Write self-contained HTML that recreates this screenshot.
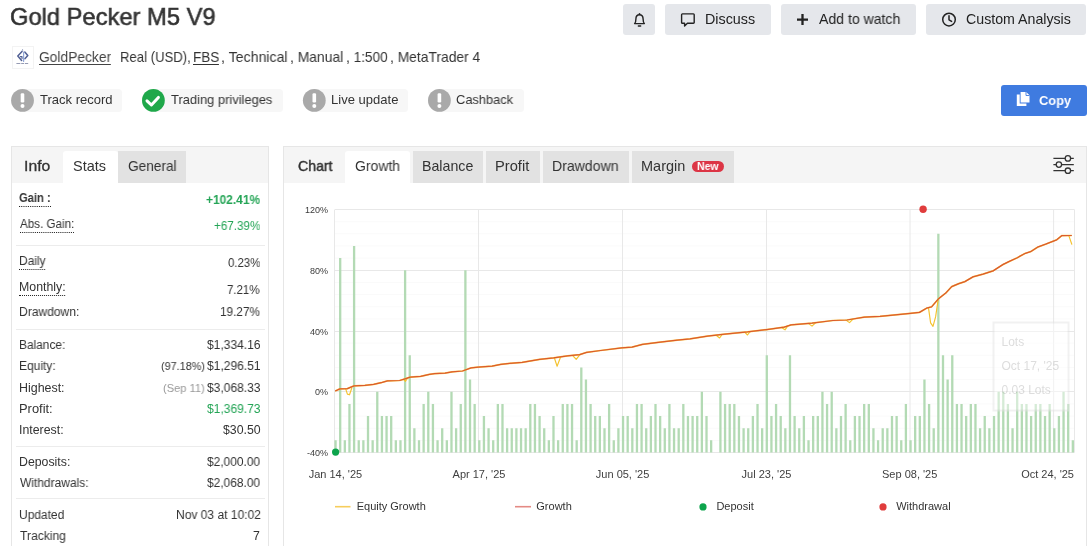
<!DOCTYPE html>
<html lang="en">
<head>
<meta charset="utf-8">
<title>Gold Pecker M5 V9</title>
<style>
html,body{margin:0;padding:0;background:#fff;}
body{width:1090px;height:546px;position:relative;overflow:hidden;font-family:"Liberation Sans",Arial,sans-serif;}
.abs{position:absolute;}
.t{position:absolute;white-space:nowrap;line-height:1;transform-origin:0 0;will-change:transform;font-family:"Liberation Sans",Arial,sans-serif;}
.t u{text-decoration:underline;text-decoration-thickness:1px;text-underline-offset:2px;}
.dot{border-bottom:1px dotted #222;padding-bottom:1px;}
.btn{position:absolute;top:4px;height:31px;background:#e5e7eb;border-radius:3px;}
.pill{position:absolute;top:88.8px;height:23.6px;background:#f7f7f7;border-radius:12px 4px 4px 12px;}
.panel{position:absolute;top:146px;height:420px;border:1px solid #e6e6e6;box-sizing:border-box;background:#fff;}
.phead{position:absolute;left:0;right:0;top:0;height:36px;background:#f5f5f5;}
.tab{position:absolute;top:151px;height:32px;background:#e2e2e2;}
.tab.on{background:#fff;height:33px;border-radius:3px 3px 0 0;}
.sep{position:absolute;left:16px;width:249px;height:1px;background:#ececec;}
svg{will-change:transform;}
svg text{font-family:"Liberation Sans",Arial,sans-serif;}
</style>
</head>
<body>

<!-- top buttons -->
<div class="btn" style="left:623px;width:32px"></div>
<div class="btn" style="left:665px;width:106px"></div>
<div class="btn" style="left:781px;width:135px"></div>
<div class="btn" style="left:926px;width:160px"></div>
<div class="abs" style="left:1001px;top:85px;width:86px;height:31px;background:#3f7be0;border-radius:3px"></div>

<!-- avatar -->
<div class="abs" style="left:12px;top:46px;width:22px;height:23px;border:1px solid #f3f3f3;box-sizing:border-box;background:#fff"></div>

<!-- badges -->
<div class="pill" style="left:12px;width:110px"></div>
<div class="pill" style="left:142px;width:141px"></div>
<div class="pill" style="left:303px;width:105px"></div>
<div class="pill" style="left:428px;width:96px"></div>

<!-- panels -->
<div class="panel" style="left:11px;width:258px"><div class="phead"></div></div>
<div class="panel" style="left:283px;width:804px"><div class="phead"></div></div>
<div class="tab on" style="left:63px;width:55px"></div>
<div class="tab" style="left:118px;width:68px"></div>
<div class="tab on" style="left:345px;width:65px"></div>
<div class="tab" style="left:413px;width:70px"></div>
<div class="tab" style="left:486px;width:54px"></div>
<div class="tab" style="left:543px;width:86px"></div>
<div class="tab" style="left:632px;width:102px"></div>
<div class="abs" style="left:692px;top:161px;width:32px;height:11px;border-radius:6px;background:#dc3545"></div>

<div class="sep" style="top:245px"></div>
<div class="sep" style="top:329px"></div>
<div class="sep" style="top:446px"></div>
<div class="sep" style="top:498px"></div>

<!-- icons -->
<svg class="abs" style="left:0;top:0" width="1090" height="130" viewBox="0 0 1090 130">
  <!-- avatar logo -->
  <g fill="none" stroke="#44548c" stroke-width="1.5" stroke-linejoin="round" stroke-linecap="round" opacity="0.92">
    <path d="M22.0 51.4 L17.8 56.0 L21.6 60.4"/>
    <path d="M20.4 56.6 H22.0 V58.6" stroke-width="1.2"/>
    <path d="M24.8 52.0 L27.8 55.5 L24.9 58.8"/>
    <path d="M23.6 52.0 V61.4" stroke="#8aa1d6" stroke-width="1.2"/>
  </g>
  <path d="M21.8 50.3 L22.6 49.2 L23.4 50.3 Z" fill="#44548c"/>
  <path d="M16.4 63.5 H29" stroke="#8a90aa" stroke-width="0.9" stroke-dasharray="4 0.8 3 0.8 3.2 1" fill="none"/>
  <!-- bell -->
  <g fill="none" stroke="#222" stroke-width="1.4" stroke-linejoin="round" stroke-linecap="round">
    <path d="M634.6 23.6 H644.4 C643.3 22.4 643.1 21.2 643.1 18.9 C643.1 16.3 641.6 14.7 639.5 14.7 C637.4 14.7 635.9 16.3 635.9 18.9 C635.9 21.2 635.7 22.4 634.6 23.6 Z"/>
    <path d="M638.4 26 H640.6" stroke-width="1.6"/>
    <path d="M639.5 13.6 V14.6"/>
  </g>
  <!-- discuss bubble -->
  <path d="M682.4 13.9 H693.4 a0.8 0.8 0 0 1 0.8 0.8 V22.4 a0.8 0.8 0 0 1 -0.8 0.8 H687.4 L684.6 25.9 V23.2 H682.4 a0.8 0.8 0 0 1 -0.8 -0.8 V14.7 a0.8 0.8 0 0 1 0.8 -0.8 Z" fill="none" stroke="#222" stroke-width="1.4" stroke-linejoin="round"/>
  <!-- plus -->
  <path d="M797 19.6 H808 M802.5 14.1 V25.1" stroke="#222" stroke-width="2.3" fill="none"/>
  <!-- clock -->
  <circle cx="949" cy="19.6" r="6.3" fill="none" stroke="#222" stroke-width="1.5"/>
  <path d="M949 15.8 V19.8 L951.6 21.4" fill="none" stroke="#222" stroke-width="1.5" stroke-linecap="round" stroke-linejoin="round"/>
  <!-- copy icon -->
  <path d="M1020.6 92 H1026.2 L1029.5 95.3 V102.6 H1020.6 Z" fill="#fff"/>
  <path d="M1016.8 94.4 H1019.7 V103.5 H1026.4 V105.9 H1016.8 Z" fill="#fff"/>
  <path d="M1026 92 V95.5 H1029.5" fill="none" stroke="#3f7be0" stroke-width="0.9"/>
  <!-- badges -->
  <g>
    <circle cx="22.5" cy="100.4" r="11.4" fill="#a9a9a9"/>
    <rect x="20.7" y="93.3" width="3.6" height="9.2" rx="1.2" fill="#fff"/>
    <circle cx="22.5" cy="106.1" r="2" fill="#fff"/>
    <circle cx="153.4" cy="100.4" r="11.4" fill="#1fa84a"/>
    <path d="M147.0 100.8 L151.4 105.0 L158.4 97.4" fill="none" stroke="#fff" stroke-width="3" stroke-linecap="round" stroke-linejoin="round"/>
    <circle cx="314.3" cy="100.4" r="11.4" fill="#a9a9a9"/>
    <rect x="312.5" y="93.3" width="3.6" height="9.2" rx="1.2" fill="#fff"/>
    <circle cx="314.3" cy="106.1" r="2" fill="#fff"/>
    <circle cx="439.4" cy="100.4" r="11.4" fill="#a9a9a9"/>
    <rect x="437.6" y="93.3" width="3.6" height="9.2" rx="1.2" fill="#fff"/>
    <circle cx="439.4" cy="106.1" r="2" fill="#fff"/>
  </g>
</svg>
<!-- settings icon -->
<svg class="abs" style="left:1050px;top:150px" width="30" height="30" viewBox="1050 150 30 30">
  <g stroke="#333" stroke-width="1.3" fill="#f5f5f5">
    <path d="M1053.4 158.4 H1073.8 M1053.4 164.6 H1073.8 M1053.4 170.7 H1073.8" fill="none"/>
    <circle cx="1067.9" cy="158.4" r="2.7"/>
    <circle cx="1058.9" cy="164.6" r="2.7"/>
    <circle cx="1067.9" cy="170.7" r="2.7"/>
  </g>
</svg>

<svg class="abs" style="left:0;top:0" width="1090" height="546" viewBox="0 0 1090 546">
<line x1="335" x2="1074.5" y1="440.4" y2="440.4" stroke="#fafafa" stroke-width="1"/>
<line x1="335" x2="1074.5" y1="428.2" y2="428.2" stroke="#fafafa" stroke-width="1"/>
<line x1="335" x2="1074.5" y1="416.1" y2="416.1" stroke="#fafafa" stroke-width="1"/>
<line x1="335" x2="1074.5" y1="403.9" y2="403.9" stroke="#fafafa" stroke-width="1"/>
<line x1="335" x2="1074.5" y1="379.6" y2="379.6" stroke="#fafafa" stroke-width="1"/>
<line x1="335" x2="1074.5" y1="367.4" y2="367.4" stroke="#fafafa" stroke-width="1"/>
<line x1="335" x2="1074.5" y1="355.3" y2="355.3" stroke="#fafafa" stroke-width="1"/>
<line x1="335" x2="1074.5" y1="343.1" y2="343.1" stroke="#fafafa" stroke-width="1"/>
<line x1="335" x2="1074.5" y1="318.9" y2="318.9" stroke="#fafafa" stroke-width="1"/>
<line x1="335" x2="1074.5" y1="306.7" y2="306.7" stroke="#fafafa" stroke-width="1"/>
<line x1="335" x2="1074.5" y1="294.5" y2="294.5" stroke="#fafafa" stroke-width="1"/>
<line x1="335" x2="1074.5" y1="282.4" y2="282.4" stroke="#fafafa" stroke-width="1"/>
<line x1="335" x2="1074.5" y1="258.1" y2="258.1" stroke="#fafafa" stroke-width="1"/>
<line x1="335" x2="1074.5" y1="245.9" y2="245.9" stroke="#fafafa" stroke-width="1"/>
<line x1="335" x2="1074.5" y1="233.8" y2="233.8" stroke="#fafafa" stroke-width="1"/>
<line x1="335" x2="1074.5" y1="221.7" y2="221.7" stroke="#fafafa" stroke-width="1"/>
<line x1="335" x2="1074.5" y1="209.5" y2="209.5" stroke="#e8e8e8" stroke-width="1"/>
<line x1="335" x2="1074.5" y1="270.5" y2="270.5" stroke="#e8e8e8" stroke-width="1"/>
<line x1="335" x2="1074.5" y1="331.5" y2="331.5" stroke="#e8e8e8" stroke-width="1"/>
<line x1="335" x2="1074.5" y1="391.5" y2="391.5" stroke="#e8e8e8" stroke-width="1"/>
<line x1="335" x2="1074.5" y1="452.5" y2="452.5" stroke="#e8e8e8" stroke-width="1"/>
<line x1="334.5" x2="334.5" y1="209.5" y2="452.5" stroke="#e8e8e8" stroke-width="1"/>
<line x1="478.5" x2="478.5" y1="209.5" y2="452.5" stroke="#e8e8e8" stroke-width="1"/>
<line x1="622.5" x2="622.5" y1="209.5" y2="452.5" stroke="#e8e8e8" stroke-width="1"/>
<line x1="766.5" x2="766.5" y1="209.5" y2="452.5" stroke="#e8e8e8" stroke-width="1"/>
<line x1="910.0" x2="910.0" y1="209.5" y2="452.5" stroke="#e8e8e8" stroke-width="1"/>
<line x1="1053.6" x2="1053.6" y1="209.5" y2="452.5" stroke="#e8e8e8" stroke-width="1"/>
<line x1="1074.5" x2="1074.5" y1="209.5" y2="452.5" stroke="#e8e8e8" stroke-width="1"/>
<path d="M335.55 452.5V440.35M340.19 452.5V258.10M344.82 452.5V440.35M349.46 452.5V403.90M354.10 452.5V245.95M358.74 452.5V440.35M363.37 452.5V440.35M368.01 452.5V416.05M372.65 452.5V440.35M377.28 452.5V391.75M381.92 452.5V416.05M386.56 452.5V416.05M391.19 452.5V416.05M395.83 452.5V440.35M400.47 452.5V440.35M405.11 452.5V270.25M409.74 452.5V355.30M414.38 452.5V428.20M419.02 452.5V440.35M423.65 452.5V403.90M428.29 452.5V391.75M432.93 452.5V403.90M437.56 452.5V440.35M442.20 452.5V428.20M446.84 452.5V440.35M451.48 452.5V391.75M456.11 452.5V428.20M460.75 452.5V403.90M465.39 452.5V270.25M470.02 452.5V379.60M474.66 452.5V403.90M479.30 452.5V440.35M483.93 452.5V416.05M488.57 452.5V428.20M493.21 452.5V440.35M497.85 452.5V403.90M502.48 452.5V403.90M507.12 452.5V428.20M511.76 452.5V428.20M516.39 452.5V428.20M521.03 452.5V428.20M525.67 452.5V428.20M530.30 452.5V403.90M534.94 452.5V403.90M539.58 452.5V416.05M544.22 452.5V428.20M548.85 452.5V440.35M553.49 452.5V416.05M558.13 452.5V440.35M562.76 452.5V403.90M567.40 452.5V403.90M572.04 452.5V403.90M576.67 452.5V440.35M581.31 452.5V367.45M585.95 452.5V379.60M590.59 452.5V403.90M595.22 452.5V416.05M599.86 452.5V416.05M604.50 452.5V428.20M609.13 452.5V403.90M613.77 452.5V440.35M618.41 452.5V428.20M623.04 452.5V416.05M627.68 452.5V416.05M632.32 452.5V428.20M636.95 452.5V403.90M641.59 452.5V403.90M646.23 452.5V428.20M650.87 452.5V416.05M655.50 452.5V403.90M660.14 452.5V416.05M664.78 452.5V428.20M669.41 452.5V403.90M674.05 452.5V428.20M678.69 452.5V428.20M683.33 452.5V403.90M687.96 452.5V416.05M692.60 452.5V416.05M697.24 452.5V416.05M701.87 452.5V391.75M706.51 452.5V416.05M711.15 452.5V440.35M720.42 452.5V391.75M725.06 452.5V403.90M729.69 452.5V403.90M734.33 452.5V403.90M738.97 452.5V416.05M743.61 452.5V428.20M748.24 452.5V428.20M752.88 452.5V416.05M757.52 452.5V403.90M762.15 452.5V428.20M766.79 452.5V355.30M771.43 452.5V416.05M776.07 452.5V403.90M780.70 452.5V416.05M785.34 452.5V428.20M789.98 452.5V355.30M794.61 452.5V416.05M799.25 452.5V428.20M803.89 452.5V416.05M808.52 452.5V440.35M813.16 452.5V416.05M817.80 452.5V416.05M822.43 452.5V391.75M827.07 452.5V403.90M831.71 452.5V391.75M836.35 452.5V428.20M840.98 452.5V416.05M845.62 452.5V403.90M850.26 452.5V440.35M854.89 452.5V416.05M859.53 452.5V416.05M864.17 452.5V403.90M868.81 452.5V403.90M873.44 452.5V428.20M878.08 452.5V440.35M882.72 452.5V428.20M887.35 452.5V428.20M891.99 452.5V416.05M896.63 452.5V416.05M901.26 452.5V440.35M905.90 452.5V403.90M910.54 452.5V440.35M915.17 452.5V416.05M919.81 452.5V416.05M924.45 452.5V379.60M929.09 452.5V403.90M933.72 452.5V428.20M938.36 452.5V233.80M943.00 452.5V355.30M947.63 452.5V379.60M952.27 452.5V355.30M956.91 452.5V403.90M961.54 452.5V403.90M966.18 452.5V416.05M970.82 452.5V403.90M975.46 452.5V403.90M980.09 452.5V428.20M984.73 452.5V416.05M989.37 452.5V428.20M994.00 452.5V416.05M998.64 452.5V391.75M1003.28 452.5V391.75M1007.91 452.5V403.90M1012.55 452.5V428.20M1017.19 452.5V391.75M1021.83 452.5V403.90M1026.46 452.5V403.90M1031.10 452.5V416.05M1035.74 452.5V403.90M1040.37 452.5V403.90M1045.01 452.5V416.05M1049.65 452.5V403.90M1054.28 452.5V428.20M1058.92 452.5V416.05M1063.56 452.5V391.75M1068.20 452.5V403.90M1072.83 452.5V440.35" stroke="#b3dab4" stroke-width="2.3" fill="none"/>
<polyline points="335.2,391.0 339.9,388.9 347.4,388.6 354.1,385.8 364.9,385.4 373.6,384.4 382.3,382.3 387.5,380.9 399.7,380.5 405.0,378.8 410.2,377.1 420.6,376.4 429.4,374.4 434.6,373.6 445.0,373.1 452.0,371.8 462.5,371.0 471.2,367.8 478.2,367.1 492.1,366.1 500.8,364.3 513.0,363.1 522.2,362.4 539.6,359.3 553.6,357.9 567.5,355.8 579.7,354.6 586.7,352.3 600.6,350.5 621.6,347.9 632.0,347.1 642.5,344.4 658.2,342.4 677.3,340.1 690.0,338.9 707.4,336.2 724.9,334.1 747.5,331.9 766.7,329.6 784.1,327.2 791.1,324.9 812.0,323.2 832.9,320.5 846.9,320.0 864.3,317.1 880.0,316.3 890.2,315.3 910.4,313.4 919.4,312.4 926.5,308.2 931.6,306.8 938.6,298.7 945.7,293.1 951.7,286.6 958.8,283.6 964.9,281.6 972.9,276.9 983.0,274.1 993.1,270.9 1003.2,264.4 1009.3,261.4 1017.3,257.7 1025.4,253.3 1030.5,251.7 1037.5,247.2 1045.6,244.2 1056.7,239.8 1061.7,235.7 1071.8,235.5" fill="none" stroke="#f6c63c" stroke-width="1.7" stroke-linejoin="round" opacity="0.9"/>
<polyline points="345.7,388.9 347.4,394.1 349.5,394.8 351.8,388.0" fill="none" stroke="#f4c22e" stroke-width="1.15" stroke-linejoin="round" stroke-linecap="round"/>
<polyline points="403.5,379.5 405.5,381.3 407.5,378.2" fill="none" stroke="#f4c22e" stroke-width="1.15" stroke-linejoin="round" stroke-linecap="round"/>
<polyline points="554.4,358.0 557.1,366.2 560.5,357.2" fill="none" stroke="#f4c22e" stroke-width="1.15" stroke-linejoin="round" stroke-linecap="round"/>
<polyline points="572.7,355.5 576.2,359.3 579.7,354.8" fill="none" stroke="#f4c22e" stroke-width="1.15" stroke-linejoin="round" stroke-linecap="round"/>
<polyline points="716.1,335.3 719.6,338.0 722.2,334.5" fill="none" stroke="#f4c22e" stroke-width="1.15" stroke-linejoin="round" stroke-linecap="round"/>
<polyline points="744.9,332.3 747.5,335.0 750.1,331.7" fill="none" stroke="#f4c22e" stroke-width="1.15" stroke-linejoin="round" stroke-linecap="round"/>
<polyline points="781.5,327.6 785.0,329.8 787.6,326.2" fill="none" stroke="#f4c22e" stroke-width="1.15" stroke-linejoin="round" stroke-linecap="round"/>
<polyline points="808.5,323.6 812.0,326.1 815.5,322.8" fill="none" stroke="#f4c22e" stroke-width="1.15" stroke-linejoin="round" stroke-linecap="round"/>
<polyline points="846.0,320.1 849.5,322.6 853.0,319.1" fill="none" stroke="#f4c22e" stroke-width="1.15" stroke-linejoin="round" stroke-linecap="round"/>
<polyline points="928.5,307.8 930.6,322.9 933.0,326.4 935.6,316.9 938.2,299.3" fill="none" stroke="#f4c22e" stroke-width="1.15" stroke-linejoin="round" stroke-linecap="round"/>
<polyline points="1068.8,235.6 1071.8,244.2" fill="none" stroke="#f4c22e" stroke-width="1.15" stroke-linejoin="round" stroke-linecap="round"/>
<polyline points="335.2,391.0 339.9,388.9 347.4,388.6 354.1,385.8 364.9,385.4 373.6,384.4 382.3,382.3 387.5,380.9 399.7,380.5 405.0,378.8 410.2,377.1 420.6,376.4 429.4,374.4 434.6,373.6 445.0,373.1 452.0,371.8 462.5,371.0 471.2,367.8 478.2,367.1 492.1,366.1 500.8,364.3 513.0,363.1 522.2,362.4 539.6,359.3 553.6,357.9 567.5,355.8 579.7,354.6 586.7,352.3 600.6,350.5 621.6,347.9 632.0,347.1 642.5,344.4 658.2,342.4 677.3,340.1 690.0,338.9 707.4,336.2 724.9,334.1 747.5,331.9 766.7,329.6 784.1,327.2 791.1,324.9 812.0,323.2 832.9,320.5 846.9,320.0 864.3,317.1 880.0,316.3 890.2,315.3 910.4,313.4 919.4,312.4 926.5,308.2 931.6,306.8 938.6,298.7 945.7,293.1 951.7,286.6 958.8,283.6 964.9,281.6 972.9,276.9 983.0,274.1 993.1,270.9 1003.2,264.4 1009.3,261.4 1017.3,257.7 1025.4,253.3 1030.5,251.7 1037.5,247.2 1045.6,244.2 1056.7,239.8 1061.7,235.7 1071.8,235.5" fill="none" stroke="#dc5a2e" stroke-width="1.25" stroke-linejoin="round"/>
<circle cx="335.6" cy="452.1" r="3.6" fill="#0da44c"/>
<circle cx="923.1" cy="209.2" r="3.7" fill="#e03c3c"/>
<text x="328" y="212.8" text-anchor="end" font-size="9" fill="#3a3a3a">120%</text>
<text x="328" y="273.8" text-anchor="end" font-size="9" fill="#3a3a3a">80%</text>
<text x="328" y="334.8" text-anchor="end" font-size="9" fill="#3a3a3a">40%</text>
<text x="328" y="394.8" text-anchor="end" font-size="9" fill="#3a3a3a">0%</text>
<text x="328" y="455.8" text-anchor="end" font-size="9" fill="#3a3a3a">-40%</text>
<text x="335.4" y="477.9" text-anchor="middle" font-size="11" fill="#3f3f3f">Jan 14, '25</text>
<text x="479.0" y="477.9" text-anchor="middle" font-size="11" fill="#3f3f3f">Apr 17, '25</text>
<text x="622.6" y="477.9" text-anchor="middle" font-size="11" fill="#3f3f3f">Jun 05, '25</text>
<text x="766.5" y="477.9" text-anchor="middle" font-size="11" fill="#3f3f3f">Jul 23, '25</text>
<text x="909.7" y="477.9" text-anchor="middle" font-size="11" fill="#3f3f3f">Sep 08, '25</text>
<text x="1074.0" y="477.9" text-anchor="end" font-size="11" fill="#3f3f3f">Oct 24, '25</text>
<line x1="335" x2="350.5" y1="506.7" y2="506.7" stroke="#f6cd5c" stroke-width="1.6"/>
<text x="356.7" y="510" font-size="11" fill="#333">Equity Growth</text>
<line x1="515" x2="531" y1="506.7" y2="506.7" stroke="#e48a84" stroke-width="1.6"/>
<text x="536.3" y="510" font-size="11" fill="#333">Growth</text>
<circle cx="703" cy="506.9" r="3.6" fill="#0da44c"/>
<text x="716.4" y="510" font-size="11" fill="#333">Deposit</text>
<circle cx="883" cy="506.9" r="3.6" fill="#e03c3c"/>
<text x="896.2" y="510" font-size="11" fill="#333">Withdrawal</text>
<g opacity="0.5"><rect x="993.5" y="322.5" width="75" height="88" fill="#fff" fill-opacity="0.9" stroke="#e4e4e4" stroke-width="2"/>
<text x="1001.5" y="345.8" font-size="12" fill="#bbb">Lots</text><text x="1001.5" y="369.8" font-size="12" fill="#bbb">Oct 17, '25</text><text x="1001.5" y="393.6" font-size="12" fill="#bbb">0.03 Lots</text></g>
</svg>

<span class="t" id="t0" style="left:10.22px;top:5.48px;font-size:24px;transform:scaleX(0.9880);color:#333;-webkit-text-stroke:0.55px #333;">Gold Pecker M5 V9</span>
<span class="t" id="t1" style="left:38.67px;top:50.10px;font-size:14.3px;transform:scaleX(0.9658);color:#444;"><u>GoldPecker</u></span>
<span class="t" id="t2" style="left:120.01px;top:50.10px;font-size:14.3px;transform:scaleX(0.9184);color:#333;">Real (USD),</span>
<span class="t" id="t3" style="left:193.41px;top:50.10px;font-size:14.3px;transform:scaleX(0.9454);color:#333;"><u>FBS</u></span>
<span class="t" id="t4" style="left:221.38px;top:50.10px;font-size:14.3px;transform:scaleX(0.9893);color:#333;">, Technical</span>
<span class="t" id="t5" style="left:290.06px;top:50.10px;font-size:14.3px;transform:scaleX(0.9705);color:#333;">, Manual</span>
<span class="t" id="t6" style="left:345.74px;top:50.10px;font-size:14.3px;transform:scaleX(0.9550);color:#333;">, 1:500</span>
<span class="t" id="t7" style="left:389.62px;top:50.10px;font-size:14.3px;transform:scaleX(0.9679);color:#333;">, MetaTrader 4</span>
<span class="t" id="t8" style="left:39.90px;top:93.20px;font-size:13px;transform:scaleX(1.0000);color:#333;">Track record</span>
<span class="t" id="t9" style="left:170.63px;top:93.20px;font-size:13px;transform:scaleX(0.9926);color:#333;">Trading privileges</span>
<span class="t" id="t10" style="left:330.51px;top:93.20px;font-size:13px;transform:scaleX(1.0024);color:#333;">Live update</span>
<span class="t" id="t11" style="left:456.27px;top:93.20px;font-size:13px;transform:scaleX(0.9882);color:#333;">Cashback</span>
<span class="t" id="t12" style="left:705.03px;top:11.88px;font-size:14.2px;transform:scaleX(1.0100);color:#222;">Discuss</span>
<span class="t" id="t13" style="left:818.85px;top:11.88px;font-size:14.2px;transform:scaleX(0.9908);color:#222;">Add to watch</span>
<span class="t" id="t14" style="left:965.64px;top:11.88px;font-size:14.2px;transform:scaleX(0.9998);color:#222;">Custom Analysis</span>
<span class="t" id="t15" style="left:1038.60px;top:93.64px;font-size:13.3px;transform:scaleX(0.9698);color:#fff;font-weight:bold;">Copy</span>
<span class="t" id="t16" style="left:24.43px;top:158.88px;font-size:14.2px;transform:scaleX(1.1104);color:#333;-webkit-text-stroke:0.3px #333;">Info</span>
<span class="t" id="t17" style="left:72.55px;top:158.88px;font-size:14.2px;transform:scaleX(1.0211);color:#333;">Stats</span>
<span class="t" id="t18" style="left:128.24px;top:158.88px;font-size:14.2px;transform:scaleX(0.9628);color:#333;">General</span>
<span class="t" id="t19" style="left:297.66px;top:158.88px;font-size:14.2px;transform:scaleX(0.9920);color:#333;-webkit-text-stroke:0.45px #333;">Chart</span>
<span class="t" id="t20" style="left:354.89px;top:158.88px;font-size:14.2px;transform:scaleX(0.9848);color:#333;">Growth</span>
<span class="t" id="t21" style="left:422.42px;top:158.88px;font-size:14.2px;transform:scaleX(0.9974);color:#333;">Balance</span>
<span class="t" id="t22" style="left:495.46px;top:158.88px;font-size:14.2px;transform:scaleX(1.0331);color:#333;">Profit</span>
<span class="t" id="t23" style="left:552.02px;top:158.88px;font-size:14.2px;transform:scaleX(0.9916);color:#333;">Drawdown</span>
<span class="t" id="t24" style="left:641.45px;top:158.88px;font-size:14.2px;transform:scaleX(1.0212);color:#333;">Margin</span>
<span class="t" id="t25" style="left:696.88px;top:160.99px;font-size:11px;transform:scaleX(0.9565);color:#fff;font-weight:bold;">New</span>
<span class="t" id="t26" style="left:19.45px;top:191.99px;font-size:12.3px;transform:scaleX(0.9095);color:#333;font-weight:bold;"><span class="dot">Gain :</span></span>
<span class="t" id="t27" style="left:206.07px;top:194.19px;font-size:12.3px;transform:scaleX(0.9713);color:#23a455;font-weight:bold;">+102.41%</span>
<span class="t" id="t28" style="left:19.69px;top:218.39px;font-size:12.3px;transform:scaleX(0.9454);color:#333;"><span class="dot">Abs. Gain:</span></span>
<span class="t" id="t29" style="left:214.06px;top:219.99px;font-size:12.3px;transform:scaleX(0.9485);color:#23a455;">+67.39%</span>
<span class="t" id="t30" style="left:18.95px;top:254.89px;font-size:12.3px;transform:scaleX(0.9701);color:#333;"><span class="dot">Daily</span></span>
<span class="t" id="t31" style="left:227.76px;top:257.19px;font-size:12.3px;transform:scaleX(0.9282);color:#333;">0.23%</span>
<span class="t" id="t32" style="left:19.00px;top:281.29px;font-size:12.3px;transform:scaleX(1.0034);color:#333;"><span class="dot">Monthly:</span></span>
<span class="t" id="t33" style="left:227.26px;top:284.19px;font-size:12.3px;transform:scaleX(0.9297);color:#333;">7.21%</span>
<span class="t" id="t34" style="left:18.96px;top:305.99px;font-size:12.3px;transform:scaleX(0.9823);color:#333;">Drawdown:</span>
<span class="t" id="t35" style="left:220.44px;top:305.99px;font-size:12.3px;transform:scaleX(0.9577);color:#333;">19.27%</span>
<span class="t" id="t36" style="left:18.95px;top:339.49px;font-size:12.3px;transform:scaleX(0.9678);color:#333;">Balance:</span>
<span class="t" id="t37" style="left:206.67px;top:339.49px;font-size:12.3px;transform:scaleX(0.9800);color:#333;">$1,334.16</span>
<span class="t" id="t38" style="left:18.98px;top:360.09px;font-size:12.3px;transform:scaleX(0.9761);color:#333;">Equity:</span>
<span class="t" id="t39" style="left:160.50px;top:360.93px;font-size:11.3px;transform:scaleX(0.9594);color:#333;">(97.18%)</span>
<span class="t" id="t40" style="left:206.67px;top:360.09px;font-size:12.3px;transform:scaleX(0.9804);color:#333;">$1,296.51</span>
<span class="t" id="t41" style="left:18.93px;top:382.39px;font-size:12.3px;transform:scaleX(1.0103);color:#333;">Highest:</span>
<span class="t" id="t42" style="left:162.80px;top:383.23px;font-size:11.3px;transform:scaleX(0.9819);color:#999;">(Sep 11)</span>
<span class="t" id="t43" style="left:206.67px;top:382.39px;font-size:12.3px;transform:scaleX(0.9800);color:#333;">$3,068.33</span>
<span class="t" id="t44" style="left:18.77px;top:403.49px;font-size:12.3px;transform:scaleX(1.0491);color:#333;">Profit:</span>
<span class="t" id="t45" style="left:206.67px;top:403.49px;font-size:12.3px;transform:scaleX(0.9800);color:#23a455;">$1,369.73</span>
<span class="t" id="t46" style="left:19.00px;top:423.79px;font-size:12.3px;transform:scaleX(1.0032);color:#333;">Interest:</span>
<span class="t" id="t47" style="left:223.44px;top:423.79px;font-size:12.3px;transform:scaleX(0.9972);color:#333;">$30.50</span>
<span class="t" id="t48" style="left:18.90px;top:455.69px;font-size:12.3px;transform:scaleX(1.0014);color:#333;">Deposits:</span>
<span class="t" id="t49" style="left:206.82px;top:455.69px;font-size:12.3px;transform:scaleX(0.9712);color:#333;">$2,000.00</span>
<span class="t" id="t50" style="left:20.00px;top:477.49px;font-size:12.3px;transform:scaleX(0.9746);color:#333;">Withdrawals:</span>
<span class="t" id="t51" style="left:206.82px;top:477.49px;font-size:12.3px;transform:scaleX(0.9712);color:#333;">$2,068.00</span>
<span class="t" id="t52" style="left:19.00px;top:508.59px;font-size:12.3px;transform:scaleX(0.9734);color:#333;">Updated</span>
<span class="t" id="t53" style="left:176.10px;top:508.59px;font-size:12.3px;transform:scaleX(0.9779);color:#333;">Nov 03 at 10:02</span>
<span class="t" id="t54" style="left:19.83px;top:529.79px;font-size:12.3px;transform:scaleX(0.9843);color:#333;">Tracking</span>
<span class="t" id="t55" style="left:253.25px;top:529.79px;font-size:12.3px;transform:scaleX(1.0000);color:#333;">7</span>

</body>
</html>
